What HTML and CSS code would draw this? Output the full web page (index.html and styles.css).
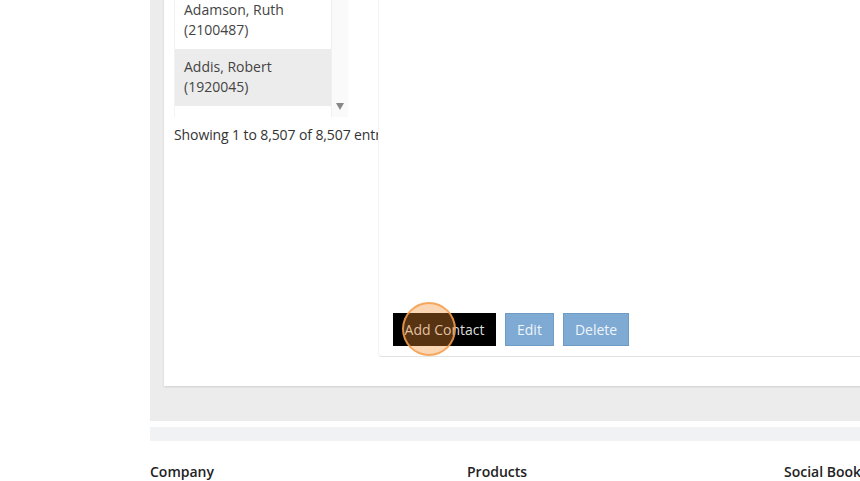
FILE: index.html
```html
<!DOCTYPE html>
<html lang="en">
<head>
    <meta charset="UTF-8">
    <meta name="viewport" content="width=device-width, initial-scale=1.0">
    <title>Contacts</title>
    <link rel="stylesheet" href="styles.css">
</head>
<body>
    <div class="page">
        <section class="main">
            <div class="card">
                <div class="list-col">
                    <div class="list-box">
                        <div class="list">
                            <div class="row">Adamson, Ruth<br>(2100487)</div>
                            <div class="row alt">Addis, Robert<br>(1920045)</div>
                            <div class="row"></div>
                        </div>
                        <div class="scrollbar">
                            <span class="arrow"></span>
                        </div>
                    </div>
                    <p class="info">Showing 1 to 8,507 of 8,507 entries</p>
                </div><!--list col-->
                <div class="detail">
                    <div class="actions">
                        <button type="button" class="btn btn-dark">Add Contact</button>
                        <button type="button" class="btn btn-blue">Edit</button>
                        <button type="button" class="btn btn-blue">Delete</button>
                        <span class="click-mark"></span>
                    </div>
                </div>
            </div>
        </section>
        <div class="strip"></div>
        <footer class="footer">
            <h4>Company</h4>
            <h4>Products</h4>
            <h4>Social Bookmarks</h4>
        </footer>
    </div>
</body>
</html>
```

FILE: styles.css
```css
html, body {
    margin: 0;
    padding: 0;
    font-family: 'Open Sans', 'Liberation Sans', sans-serif;
    color: #444;
    background: #fff;
    overflow: hidden;
}

.page {
    margin-top: -40px;
    margin-left: 150px;
    width: 1000px;
}

.main {
    background: #edecec;
    padding: 0 0 35px 14px;
}

.card {
    display: flex;
    background: #fff;
    padding: 31px 0 29px 10px;
    box-shadow: 0 1px 2px rgba(0, 0, 0, 0.12);
}

.list-col {
    width: 204px;
    padding-top: 1px;
    overflow: hidden;
    flex-shrink: 0;
}

.list-box {
    display: flex;
    width: 174px;
    height: 125px;
    overflow: hidden;
}

.list {
    width: 157px;
    border-left: 1px solid #f2f2f2;
}

.row {
    padding: 8px 9px;
    height: 41px;
    font-size: 14px;
    line-height: 20px;
    color: #444;
}

.alt {
    background: #edecec;
}

.scrollbar {
    width: 16px;
    background: #fafafa;
    border-left: 1px solid #f0f0f0;
    display: flex;
    flex-direction: column;
    justify-content: flex-end;
    align-items: center;
    padding-bottom: 7px;
}

.arrow {
    width: 0;
    height: 0;
    border-left: 4.5px solid transparent;
    border-right: 4.5px solid transparent;
    border-top: 7px solid #888;
}

.info {
    margin: 8px 0 0;
    font-size: 14px;
    line-height: 20px;
    letter-spacing: -0.1px;
    color: #333;
    white-space: nowrap;
}

.detail {
    flex: 1;
    height: 365px;
    border-left: 1px solid #f3f3f3;
    border-bottom: 1px solid #e2e2e2;
    border-bottom-left-radius: 4px;
    display: flex;
    flex-direction: column;
    justify-content: flex-end;
}

.actions {
    position: relative;
    display: flex;
    gap: 9px;
    padding: 0 0 10px 14px;
}

.btn {
    height: 33px;
    padding: 0 12px;
    border: none;
    white-space: nowrap;
    font-family: 'Open Sans', 'Liberation Sans', sans-serif;
    font-size: 14px;
    color: #fff;
}

.btn-dark {
    background: #000;
    color: #ddd;
    width: 103px;
    padding: 0;
}

.btn-blue {
    background: #7eaad4;
    color: #eef4fa;
    border: 1px solid #6f9cc7;
    padding: 0 11px;
}

.click-mark {
    position: absolute;
    left: 23px;
    top: -11px;
    width: 50px;
    height: 50px;
    border-radius: 50%;
    background: rgba(240, 140, 50, 0.36);
    border: 2px solid rgba(244, 160, 80, 0.85);
}

.strip {
    margin-top: 6px;
    height: 14px;
    background: #f1f2f3;
}

.footer {
    display: flex;
    padding-top: 21px;
}

.footer h4 {
    width: 317px;
    margin: 0;
    font-size: 14px;
    line-height: 20px;
    font-weight: 600;
    color: #222;
}
```
